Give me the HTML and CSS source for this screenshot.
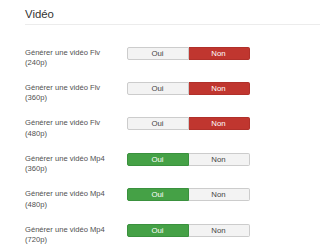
FILE: index.html
```html
<!DOCTYPE html>
<html lang="fr">
<head>
<meta charset="utf-8">
<link rel="stylesheet" href="styles.css">
</head>
<body>
<div class="page">
  <h2 class="title">Vidéo</h2>
  <div class="fields">
    <div class="row">
      <div class="label">Générer une vidéo Flv<br>(240p)</div>
      <div class="toggle"><span class="opt">Oui</span><span class="opt no active">Non</span></div>
    </div>
    <div class="row">
      <div class="label">Générer une vidéo Flv<br>(360p)</div>
      <div class="toggle"><span class="opt">Oui</span><span class="opt no active">Non</span></div>
    </div>
    <div class="row">
      <div class="label">Générer une vidéo Flv<br>(480p)</div>
      <div class="toggle"><span class="opt">Oui</span><span class="opt no active">Non</span></div>
    </div>
    <div class="row">
      <div class="label">Générer une vidéo Mp4<br>(360p)</div>
      <div class="toggle"><span class="opt yes active">Oui</span><span class="opt">Non</span></div>
    </div>
    <div class="row">
      <div class="label">Générer une vidéo Mp4<br>(480p)</div>
      <div class="toggle"><span class="opt yes active">Oui</span><span class="opt">Non</span></div>
    </div>
    <div class="row">
      <div class="label">Générer une vidéo Mp4<br>(720p)</div>
      <div class="toggle"><span class="opt yes active">Oui</span><span class="opt">Non</span></div>
    </div>
  </div>
</div>
</body>
</html>
```
FILE: styles.css
```css
html, body {
  margin: 0;
  padding: 0;
  background: #ffffff;
  font-family: "Liberation Sans", Arial, sans-serif;
}
.page {
  padding: 7px 0 0 25px;
}
.title {
  margin: 0;
  font-size: 11.4px;
  font-weight: normal;
  line-height: 14px;
  color: #333333;
  padding-bottom: 3px;
  border-bottom: 1px solid #ececec;
}
.fields {
  margin-top: 21.6px;
  display: flex;
  flex-direction: column;
  gap: 13.4px;
}
.row {
  display: flex;
  align-items: flex-start;
}
.label {
  width: 101.5px;
  font-size: 7.6px;
  line-height: 10.5px;
  color: #505050;
  padding-top: 1px;
}
.toggle {
  display: flex;
  width: 123px;
  height: 13px;
}
.opt {
  flex: 1;
  box-sizing: border-box;
  font-size: 7.8px;
  line-height: 11px;
  text-align: center;
  color: #444444;
  background: #f3f3f3;
  border: 1px solid #cccccc;
}
.opt:first-child {
  border-radius: 2px 0 0 2px;
}
.opt:last-child {
  border-radius: 0 2px 2px 0;
  border-left: none;
}
.opt.no.active {
  background: #c0362f;
  border-color: #b0302a;
  color: #ffffff;
}
.opt.yes.active {
  background: #45a146;
  border-color: #3a913e;
  color: #ffffff;
}
```
